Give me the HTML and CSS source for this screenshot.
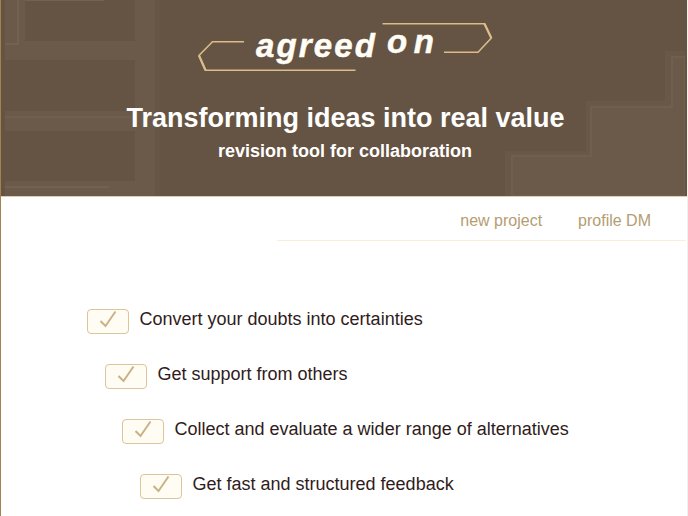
FILE: index.html
```
<!DOCTYPE html>
<html lang="en">
<head>
    <meta charset="UTF-8">
    <meta name="viewport" content="width=device-width, initial-scale=1.0">
    <title>agreed on</title>
    <link rel="stylesheet" href="styles.css">
</head>
<body>
    <header class="banner">
        <svg class="pattern" width="684" height="196" viewBox="0 0 684 196" shape-rendering="crispEdges">
            <!-- left blocks -->
            <g fill="#6b5a49">
                <rect x="134" y="0" width="20" height="196"/>
                <rect x="4" y="41" width="130" height="19"/>
                <rect x="4" y="111" width="130" height="20"/>
                <rect x="4" y="181" width="130" height="15"/>
                <rect x="4" y="0" width="20" height="51"/>
            </g>
            <g fill="none" stroke="#73624f" stroke-width="2">
                <path d="M17 0V44H4"/>
                <path d="M24 0H103"/>
                <path d="M4 117H130" stroke="#705f4e"/>
                <path d="M4 187H108"/>
            </g>
            <rect x="154" y="0" width="5" height="196" fill="#675645"/>
            <!-- right stairs -->
            <path d="M504 196V151H585V101H664V51H684V196Z" fill="#695848"/>
            <path d="M511 196V156H590V107H671V57H684V196Z" fill="#6b5a49" stroke="#6f5f4d" stroke-width="2"/>
        </svg>
        <svg class="logo" width="296" height="52" viewBox="197 21 296 52">
            <g fill="none" stroke="#dcbc8a" stroke-width="1.5">
                <path d="M244 41.7H212.5L199 55.500L205.500 70.300H355.500"/>
                <path d="M382.500 23.700H484.500L491.300 38L478 52.300H444"/>
            </g>
            <path d="M199 55.500L205.500 70.300M484.500 23.700L491.300 38" stroke="#dcbc8a" stroke-width="2.200"/>
            <text x="256" y="57" textLength="119">agreed</text>
            <text x="387" y="52.500" textLength="47">on</text>
        </svg>
        <h1>Transforming ideas into real value</h1>
        <h2>revision tool for collaboration</h2>
    </header>
    <nav class="menu">
        <a>new project</a>
        <a>profile DM</a>
    </nav>
    <ul class="benefits">
        <li>
            <span class="check"><svg width="18" height="19" viewBox="0 0 18 19"><path d="M0.500 11L5.500 16L15.500 1.500"/></svg></span>
            Convert your doubts into certainties
        </li>
        <li>
            <span class="check"><svg width="18" height="19" viewBox="0 0 18 19"><path d="M0.500 11L5.500 16L15.500 1.500"/></svg></span>
            Get support from others
        </li>
        <li>
            <span class="check"><svg width="18" height="19" viewBox="0 0 18 19"><path d="M0.500 11L5.500 16L15.500 1.500"/></svg></span>
            Collect and evaluate a wider range of alternatives
        </li>
        <li>
            <span class="check"><svg width="18" height="19" viewBox="0 0 18 19"><path d="M0.500 11L5.500 16L15.500 1.500"/></svg></span>
            Get fast and structured feedback
        </li>
    </ul>
</body>
</html>
```
FILE: styles.css
```
* {
    box-sizing: border-box;
}
body {
    margin: 0;
    height: 516px;
    overflow: hidden;
    border-left: 1px solid #a48250;
    border-right: 1px solid #f3f1ee;
    font-family: "Liberation Sans", Arial, sans-serif;
    background-color: #fff;
}
.banner {
    position: relative;
    height: 197px;
    padding-top: 21px;
    background-color: #655443;
    border-bottom: 1px solid #e0cdb0;
    text-align: center;
    color: #fff;
}
.pattern {
    position: absolute;
    top: 0;
    left: 0;
}
.logo {
    position: relative;
    display: block;
    margin-left: 196px;
}
.logo text {
    font-size: 33px;
    font-weight: bold;
    font-style: italic;
    fill: #fffdf5;
    stroke: #fffdf5;
    stroke-width: 0.5px;
}
h1, h2 {
    position: relative;
    margin: 0;
    font-weight: bold;
}
h1 {
    margin-top: 30px;
    padding-left: 3px;
    font-size: 27px;
    line-height: 31px;
}
h2 {
    margin-top: 7px;
    padding-left: 2px;
    font-size: 18px;
    line-height: 21px;
}
.menu {
    display: flex;
    justify-content: flex-end;
    gap: 36px;
    height: 44px;
    margin-left: 276px;
    margin-right: 1px;
    padding: 15px 35px 0 0;
    border-bottom: 1px solid #f8efd9;
    font-size: 16px;
    line-height: 18px;
    color: #b59d71;
}
.benefits {
    margin: 0;
    padding: 68px 0 0 86px;
    list-style: none;
    font-size: 18px;
    color: #301c20;
}
.benefits li {
    display: flex;
    gap: 10.5px;
    height: 25px;
    margin-bottom: 30px;
    line-height: 20px;
}
.benefits li:nth-child(2) {
    margin-left: 18px;
}
.benefits li:nth-child(3) {
    margin-left: 35px;
}
.benefits li:nth-child(4) {
    margin-left: 53px;
}
.check {
    width: 42px;
    height: 25px;
    padding-left: 12px;
    border: 1px solid #dcc49c;
    border-radius: 4px;
    background-color: #fffcf3;
}
.check svg {
    display: block;
    fill: none;
    stroke: #c9b285;
    stroke-width: 2;
}
```
